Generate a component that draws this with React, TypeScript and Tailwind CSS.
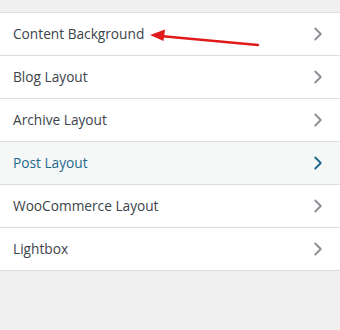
import { ChevronRight } from "lucide-react";

const items = [
  { label: "Content Background" },
  { label: "Blog Layout" },
  { label: "Archive Layout" },
  { label: "Post Layout", active: true },
  { label: "WooCommerce Layout" },
  { label: "Lightbox" },
];

export default function App() {
  return (
    <div className="w-[340px] h-[330px] bg-[#f0f0f1] pt-[12px] font-['Open_Sans',sans-serif]">
      <ul className="border-t border-[#dcdcde] bg-white">
        {items.map(({ label, active }, i) => (
          <li
            key={label}
            className={`relative flex h-[43px] items-center justify-between border-b border-[#dcdcde] pl-[13px] pr-[11px] text-[13.7px] ${
              active ? "bg-[#f6f7f7] text-[#1e6a8d]" : "text-[#3c434a]"
            }`}
          >
            <span>{label}</span>
            <ChevronRight
              size={22}
              strokeWidth={2.1}
              className={active ? "text-[#1e6a8d]" : "text-[#8c8f94]"}
            />
            {i === 0 && (
              <svg
                className="absolute left-0 top-0"
                width="340"
                height="43"
                viewBox="0 0 340 43"
              >
                <line
                  x1="258"
                  y1="32"
                  x2="160"
                  y2="23"
                  stroke="#e01b1b"
                  strokeWidth="2.5"
                  strokeLinecap="round"
                />
                <polygon points="150,22 165,16.5 163.5,28" fill="#e01b1b" />
              </svg>
            )}
          </li>
        ))}
      </ul>
    </div>
  );
}
